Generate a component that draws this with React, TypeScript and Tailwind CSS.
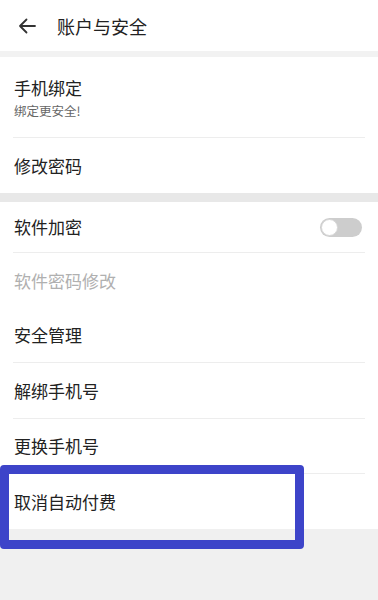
import React from "react";

const font = { fontFamily: '"Noto Sans CJK SC", "Noto Sans", sans-serif' };

function Divider() {
  return <div className="mx-[13px] h-px bg-[#ededed]" />;
}

function Row({
  label,
  muted,
  h,
  children,
}: {
  label: string;
  muted?: boolean;
  h: string;
  children?: React.ReactNode;
}) {
  return (
    <div className={`flex items-center justify-between pl-[14px] pr-[16px] ${h}`}>
      <span className={`text-[17px] leading-[22px] ${muted ? "text-[#b0b0b0]" : "text-[#222]"}`}>
        {label}
      </span>
      {children}
    </div>
  );
}

function Toggle() {
  return (
    <div className="flex h-[19px] w-[42px] items-center rounded-full bg-[#cdcdcd] p-px">
      <div className="h-[17px] w-[17px] rounded-full border border-[#d6d6d6] bg-white" />
    </div>
  );
}

export default function App() {
  return (
    <div className="min-h-[600px] w-full bg-[#f0f0f0]" style={font}>
      {/* header */}
      <div className="flex h-[51px] items-center bg-white">
        <svg className="ml-[18px]" width="18" height="16" viewBox="0 0 18 16" fill="none">
          <path d="M17 8H2M8.5 1.5L2 8l6.5 6.5" stroke="#333" strokeWidth="1.8" strokeLinecap="round" strokeLinejoin="round" />
        </svg>
        <span className="ml-[21px] text-[18px] leading-[24px] text-[#222]">账户与安全</span>
      </div>
      <div className="h-[6px] bg-[#f2f2f2]" />

      {/* group 1 */}
      <div className="bg-white">
        <div className="h-[80px] pl-[14px] pt-[20px]">
          <div className="text-[17px] leading-[22px] text-[#222]">手机绑定</div>
          <div className="mt-[4px] text-[12.5px] leading-[16px] text-[#666]">绑定更安全!</div>
        </div>
        <Divider />
        <Row label="修改密码" h="h-[55px]" />
      </div>
      <div className="h-[9px] bg-[#e8e8e8]" />

      {/* group 2 */}
      <div className="bg-white">
        <Row label="软件加密" h="h-[50px]">
          <Toggle />
        </Row>
        <Divider />
        <Row label="软件密码修改" muted h="h-[55px]" />
        <Row label="安全管理" h="h-[54px]" />
        <Divider />
        <Row label="解绑手机号" h="h-[55px]" />
        <Divider />
        <Row label="更换手机号" h="h-[54px]" />
        <div className="relative">
          <Divider />
          <Row label="取消自动付费" h="h-[55px]" />
          <div className="absolute left-0 top-[-8px] h-[84px] w-[304px] rounded-[4px] border-[9px] border-[#3d44c9]" />
        </div>
      </div>
    </div>
  );
}
